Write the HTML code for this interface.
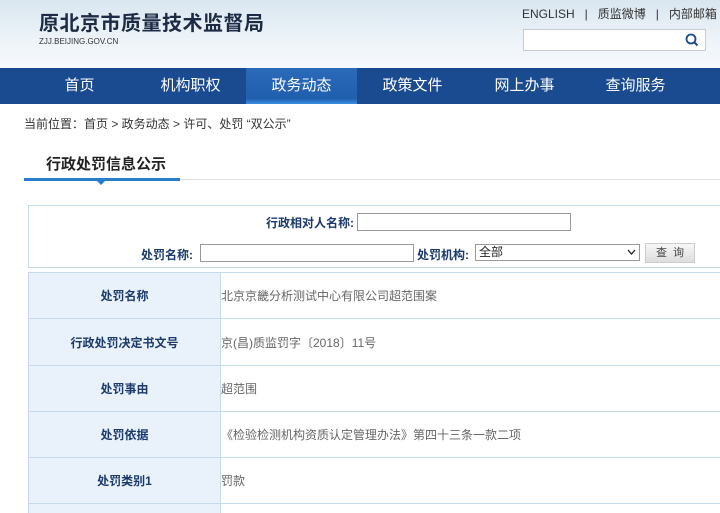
<!DOCTYPE html><html><head><meta charset="utf-8"><style>
*{margin:0;padding:0;box-sizing:border-box}
body{width:720px;height:505px;overflow:hidden;background:#fff;font-family:"Liberation Sans","Noto Sans CJK SC",sans-serif;position:relative}
.hd{position:absolute;left:0;top:0;width:720px;height:68px;background:linear-gradient(180deg,#d9e6f0 0%,#eef4f9 60%,#f6f9fc 100%)}
.t{position:absolute;left:39px;top:7px;font-size:20px;font-weight:bold;color:#1d2b44;letter-spacing:0.5px}
.u{position:absolute;left:39px;top:37px;font-size:8px;color:#333}
.links{position:absolute;left:522px;top:5px;font-size:12px;color:#333;white-space:nowrap}
.sb{position:absolute;left:523px;top:29px;width:183px;height:22px;background:#fff;border:1px solid #c6ccd2}
.nav{position:absolute;left:0;top:68px;width:720px;height:36px;background:#1a4b91}
.nav div{position:absolute;top:0;width:111px;height:36px;line-height:36px;text-align:center;color:#fff;font-size:15px}
.nav .a{background:linear-gradient(180deg,#2a6ab8,#1f5fae 85%,#3a8ee0)}
.bc{position:absolute;left:24px;top:115px;font-size:12px;color:#333}
.tt{position:absolute;left:46px;top:153px;font-size:15px;font-weight:bold;color:#222}
.l1{position:absolute;left:24px;top:179px;width:696px;height:1px;background:#ddd}
.l2{position:absolute;left:24px;top:178px;width:156px;height:3px;background:#2a7ccc}
.tri{position:absolute;left:97px;top:181px;border:4px solid transparent;border-top:4px solid #2a7ccc}
.sf{position:absolute;left:28px;top:205px;width:700px;height:63px;border:1px solid #c5dbec}
.lab{position:absolute;font-size:12px;font-weight:bold;color:#1b3a6b}
.in{position:absolute;height:18px;border:1px solid #999;background:#fff}
.sel{position:absolute;left:475px;top:244px;width:165px;height:17px;border:1px solid #999;font-size:12px;padding-left:3px;line-height:15px;color:#222}
.btn{position:absolute;left:645px;top:243px;width:50px;height:20px;background:linear-gradient(#f7f7f7,#ddd);border:1px solid #ccc;font-size:11px;text-align:center;line-height:18px;color:#444;letter-spacing:6px;padding-left:6px}
.row{position:absolute;left:28px;width:700px;border-top:1px solid #c5dbec;border-left:1px solid #c5dbec}
.row .k{position:absolute;left:0;top:0;width:192px;height:100%;background:#e9f2fb;border-right:1px solid #c5dbec;font-size:12px;font-weight:bold;color:#1b3a6b;display:flex;align-items:center;justify-content:center}
.row .v{position:absolute;left:192px;top:0;height:100%;display:flex;align-items:center;font-size:12px;color:#666}
</style></head><body>
<div class="hd"></div>
<div class="t">原北京市质量技术监督局</div>
<div class="u">ZJJ.BEIJING.GOV.CN</div>
<div class="links">ENGLISH &nbsp; | &nbsp; 质监微博 &nbsp; | &nbsp; 内部邮箱</div>
<div class="sb"><svg style="position:absolute;right:6px;top:3px" width="14" height="14" viewBox="0 0 14 14"><circle cx="6" cy="6" r="4.5" fill="none" stroke="#1a4b91" stroke-width="1.8"/><path d="M9.3 9.3L12.5 12.5" stroke="#1a4b91" stroke-width="2"/></svg></div>
<div class="nav"><div style="left:24px">首页</div><div style="left:135px">机构职权</div><div class="a" style="left:246px">政务动态</div><div style="left:357px">政策文件</div><div style="left:469px">网上办事</div><div style="left:580px">查询服务</div></div>
<div class="bc">当前位置：首页 &gt; 政务动态 &gt; 许可、处罚 “双公示”</div>
<div class="tt">行政处罚信息公示</div>
<div class="l1"></div><div class="l2"></div><div class="tri"></div>
<div class="sf"></div>
<div class="lab" style="left:266px;top:214px">行政相对人名称:</div>
<div class="in" style="left:357px;top:213px;width:214px"></div>
<div class="lab" style="left:141px;top:246px">处罚名称:</div>
<div class="in" style="left:200px;top:244px;width:214px"></div>
<div class="lab" style="left:417px;top:246px">处罚机构:</div>
<div class="sel">全部<svg style="position:absolute;right:3px;top:4px" width="9" height="6" viewBox="0 0 9 6"><path d="M1 1L4.5 5L8 1" fill="none" stroke="#222" stroke-width="1.3"/></svg></div>
<div class="btn">查询</div>
<div class="row" style="top:272px;height:46px"><div class="k">处罚名称</div><div class="v">北京京畿分析测试中心有限公司超范围案</div></div>
<div class="row" style="top:318px;height:47px"><div class="k">行政处罚决定书文号</div><div class="v">京(昌)质监罚字〔2018〕11号</div></div>
<div class="row" style="top:365px;height:46px"><div class="k">处罚事由</div><div class="v">超范围</div></div>
<div class="row" style="top:411px;height:46px"><div class="k">处罚依据</div><div class="v">《检验检测机构资质认定管理办法》第四十三条一款二项</div></div>
<div class="row" style="top:457px;height:46px"><div class="k">处罚类别1</div><div class="v">罚款</div></div>
<div class="row" style="top:503px;height:10px"><div class="k"></div></div>
</body></html>
